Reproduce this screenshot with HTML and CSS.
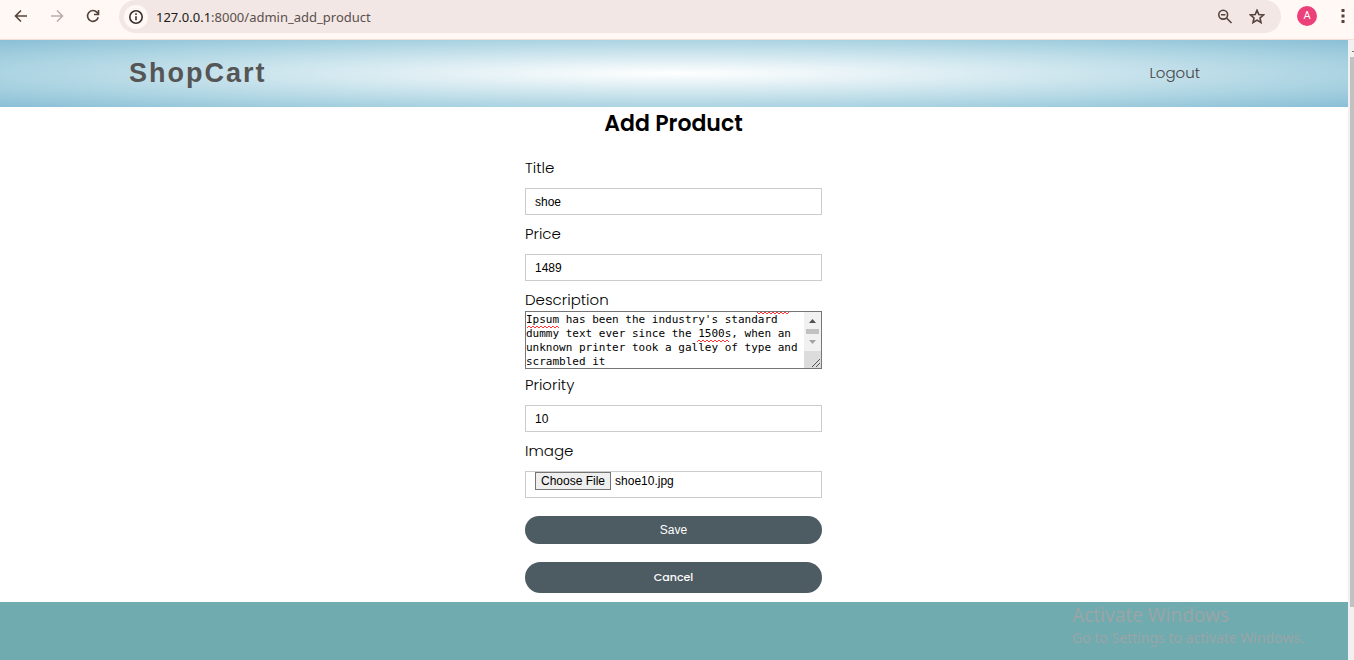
FILE: index.html
```html
<!DOCTYPE html>
<html lang="en">
<head>
<meta charset="utf-8">
<title>Add Product</title>
<link rel="stylesheet" href="styles.css">
</head>
<body>
<div class="toolbar">
  <div class="nav-buttons">
    <button class="icon-button" aria-label="Back"><svg width="16" height="16" viewBox="0 0 16 16"><path d="M14 8H3M8 2.500L2.500 8L8 13.500"/></svg></button>
    <button class="icon-button faded" aria-label="Forward"><svg width="16" height="16" viewBox="0 0 16 16"><path d="M2 8h11M8 2.500L13.500 8L8 13.500"/></svg></button>
    <button class="icon-button" aria-label="Reload"><svg width="16" height="16" viewBox="0 0 16 16"><path d="M13.200 9.200A5.400 5.400 0 1 1 12 4.400L13.500 6M13.500 2v4.500H9"/></svg></button>
  </div>
  <div class="address">
    <button class="site-info" aria-label="Site information"><svg width="16" height="16" viewBox="0 0 16 16"><circle cx="8" cy="8" r="6.200"/><path d="M8 7.300v4M8 4.300v1.600"/></svg></button>
    <div class="url"><span class="host">127.0.0.1</span>:8000/admin_add_product</div>
    <button class="icon-button" aria-label="Zoom"><svg width="16" height="16" viewBox="0 0 16 16"><circle cx="6.200" cy="5.700" r="4.400"/><path d="M9.500 9L14.500 14M4 5.700h4.400"/></svg></button>
    <button class="icon-button" aria-label="Bookmark"><svg width="16" height="16" viewBox="0 0 16 16"><path d="M8 1.200L9.800 5.500L14.500 5.900L11 9L12 13.500L8 11.100L4 13.500L5 9L1.500 5.900L6.200 5.500Z"/></svg></button>
  </div>
  <button class="avatar" aria-label="Profile">A</button>
  <button class="icon-button menu" aria-label="Menu"><svg width="8" height="16" viewBox="0 0 8 16"><path class="solid" d="M2.500 1h3v3h-3zM2.500 6.500h3v3h-3zM2.500 12h3v3h-3z"/></svg></button>
</div>
<div class="viewport">
  <div class="page">
    <header class="site-header">
      <a class="brand" href="#">ShopCart</a>
      <a class="logout" href="#">Logout</a>
    </header>
    <main>
      <h1>Add Product</h1>
      <form class="product-form">
        <div class="field"><label for="title">Title</label><input id="title" type="text" value="shoe"></div>
        <div class="field"><label for="price">Price</label><input id="price" type="text" value="1489"></div>
        <div class="field description">
          <label for="description">Description</label>
          <div class="editor">
            <textarea id="description" spellcheck="false">Ipsum has been the industry's standard dummy text ever since the 1500s, when an unknown printer took a galley of type and scrambled it</textarea>
            <svg class="squiggles" width="278" height="56" viewBox="0 0 278 56"><path d="M1 16l2-2 2 2 2-2 2 2 2-2 2 2 2-2 2 2 2-2 2 2 2-2 2 2 2-2 2 2 2-2 2 2M171 30l2-2 2 2 2-2 2 2 2-2 2 2 2-2 2 2 2-2 2 2 2-2 2 2 2-2 2 2 2-2 2 2M231 0l2 2 2-2 2 2 2-2 2 2 2-2 2 2 2-2 2 2 2-2 2 2 2-2 2 2 2-2 2 2 2-2"/></svg>
            <svg class="editor-scroll" width="17" height="56" viewBox="0 0 17 56"><path fill="#f1f1f1" d="M0 0h17v39H0z"/><path fill="#dcdcdc" d="M0 39h17v17H0z"/><path fill="#505050" d="M5 11h7L8.500 7z"/><path fill="#c1c1c1" d="M2 17h13v5H2z"/><path fill="#a3a3a3" d="M5 28h7l-3.500 4z"/><path stroke="#555" d="M8 55l8-8M12 55l4-4"/></svg>
          </div>
        </div>
        <div class="field"><label for="priority">Priority</label><input id="priority" type="text" value="10"></div>
        <div class="field"><label for="image">Image</label><input id="image" type="file"></div>
        <button class="action save" type="submit">Save</button>
        <button class="action cancel" type="button">Cancel</button>
      </form>
    </main>
    <footer></footer>
  </div>
  <div class="scrollbar"><div class="scroll-arrow"></div><div class="thumb"></div></div>
</div>
<div class="activation"><div class="activation-title">Activate Windows</div><div>Go to Settings to activate Windows.</div></div>
<script src="form.js"></script>
</body>
</html>
```
FILE: form.js
```js
const selection = new DataTransfer();
selection.items.add(new File([""], "shoe10.jpg", { type: "image/jpeg" }));
document.getElementById("image").files = selection.files;
```
FILE: styles.css
```css
* { box-sizing: border-box; }
body {
  margin: 0;
  height: 100vh;
  display: flex;
  flex-direction: column;
  overflow: hidden;
  background: #fff;
  color: #000;
  font: 300 15px/20px Poppins, Inter, sans-serif;
}
button { border: 0; padding: 0; background: none; }
a { text-decoration: none; }

.toolbar {
  height: 40px;
  flex: none;
  display: flex;
  align-items: flex-start;
  background: #fff8f5;
  border-bottom: 1px solid #f3ded8;
}
.nav-buttons { display: flex; gap: 20px; padding: 8px 18px 0 13px; }
.icon-button { width: 16px; height: 16px; display: flex; color: #55423b; }
.icon-button svg, .site-info svg { fill: none; stroke: currentColor; stroke-width: 1.6; }
.icon-button .solid { fill: currentColor; stroke: none; }
.faded { color: #b9aeaa; }
.address {
  flex: 1;
  height: 33px;
  display: flex;
  align-items: center;
  gap: 16px;
  padding: 0 16px 0 5px;
  border-radius: 17px;
  background: #f2e7e4;
}
.site-info {
  width: 24px;
  height: 24px;
  display: grid;
  place-items: center;
  border-radius: 12px;
  background: #fff8f5;
  color: #35302e;
}
.url { flex: 1; margin-left: -8px; font: 13px/20px "Noto Sans", sans-serif; color: #5a504d; }
.host { color: #211a18; }
.avatar {
  width: 20px;
  height: 20px;
  margin: 6px 18px 0 16px;
  border-radius: 10px;
  background: #ec407a;
  color: #fff;
  font: 11px/20px Roboto, sans-serif;
}
.menu { width: 8px; margin: 8px 7px 0 4px; }

.viewport { flex: 1; min-height: 0; display: flex; }
.page { flex: 1; display: flex; flex-direction: column; }
.site-header {
  height: 67px;
  display: flex;
  align-items: center;
  justify-content: space-between;
  padding: 0 148px 2px 129px;
  background: radial-gradient(#fff, #acd4e2 70%, #8abfd6);
}
.brand { font: bold 27px/32px "Liberation Sans", sans-serif; letter-spacing: 2px; color: #555; }
.logout { color: #444; }

main { display: flex; flex-direction: column; align-items: center; padding: 0 1px 9px 0; }
h1 { margin: 0 0 18px; font-size: 22px; font-weight: 600; line-height: 33px; }
.product-form { width: 100%; max-width: 297px; display: flex; flex-direction: column; }
.field { display: flex; flex-direction: column; gap: 10px; margin-bottom: 9px; }
.field input {
  width: 100%;
  height: 27px;
  padding: 0 9px;
  border: 1px solid #ccc;
  background: #fff;
  font: 12px "Liberation Sans", sans-serif;
  color: #000;
}
.field input::file-selector-button {
  height: 18px;
  padding: 0 5px;
  border: 1px solid #767676;
  background: #efefef;
  font: 12px "Liberation Sans", sans-serif;
}
.description { gap: 1px; margin-bottom: 6px; }
.editor { position: relative; }
textarea {
  display: block;
  width: 100%;
  height: 58px;
  margin: 0;
  padding: 1px 18px 0 0;
  border: 1px solid #767676;
  overflow: hidden;
  resize: none;
  font: 11px/14px "DejaVu Sans Mono", monospace;
}
.squiggles {
  position: absolute;
  left: 1px;
  top: 1px;
  fill: none;
  stroke: #f33;
  pointer-events: none;
}
.editor-scroll { position: absolute; right: 1px; top: 1px; }

.action {
  margin-top: 18px;
  border-radius: 16px;
  background: #4d5b62;
  color: #fff;
}
.save { height: 28px; margin-top: 9px; font: 12px "Liberation Sans", sans-serif; }
.cancel { height: 31px; font: 500 11px Poppins, Inter, sans-serif; }
footer { flex: 1; background: #70abaf; }

.scrollbar { width: 6px; padding: 11px 0 53px 2px; display: flex; flex-direction: column; background: #f1f1f1; }
.scroll-arrow { width: 2px; height: 1px; margin: 0 0 5px 2px; background: #777; }
.thumb { flex: 1; background: #c1c1c1; }

.activation {
  position: absolute;
  right: 46px;
  bottom: 12px;
  width: 236px;
  color: #99a5a7;
  font: 14px/20px "Noto Sans", sans-serif;
  white-space: nowrap;
}
.activation-title { font-size: 19px; line-height: 26px; }
```
